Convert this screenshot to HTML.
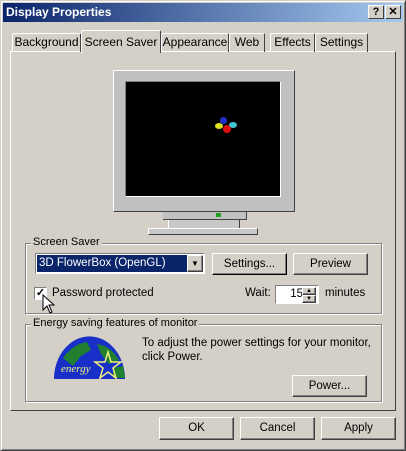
<!DOCTYPE html><html><head><style>
*{box-sizing:border-box;margin:0;padding:0}
body{width:406px;height:451px;background:#d4d0c8;font-family:"Liberation Sans",sans-serif;font-size:11px;color:#000;position:relative;overflow:hidden}
.a{position:absolute}
.win{left:0;top:0;width:406px;height:451px;border:1px solid;border-color:#d4d0c8 #404040 #404040 #d4d0c8;box-shadow:inset 1px 1px #fff,inset -1px -1px #808080}
.title{left:3px;top:3px;width:400px;height:19px;background:linear-gradient(90deg,#0a246a,#a6caf0);color:#fff;font-weight:bold;font-size:12px;line-height:19px;padding-left:3px}
.tb{top:5px;width:16px;height:14px;background:#d4d0c8;border:1px solid;border-color:#fff #404040 #404040 #fff;font-weight:bold;font-size:11px;text-align:center;line-height:12px;color:#000}
.tab{top:33px;height:19px;border:1px solid;border-color:#fff #404040 #d4d0c8 #fff;border-bottom:none;border-radius:2px 2px 0 0;text-align:center;line-height:16px;font-size:12px}
.panel{left:10px;top:51px;width:386px;height:360px;border:1px solid;border-color:#fff #404040 #404040 #fff}
.grp{border:1px solid #808080;box-shadow:1px 1px #fff,inset 1px 1px #fff}
.lbl{background:#d4d0c8;padding:0 2px;font-size:11px}
.btn{background:#d4d0c8;border:1px solid;border-color:#fff #404040 #404040 #fff;box-shadow:inset -1px -1px #808080;text-align:center;font-size:11px}
</style></head><body>
<div class="a win"></div>
<div class="a title">Display Properties</div>
<div class="a tb" style="left:368px">?</div>
<div class="a tb" style="left:385px">✕</div>
<div class="a panel"></div>
<div class="a tab" style="left:12px;width:69px">Background</div>
<div class="a tab" style="left:161px;width:68px">Appearance</div>
<div class="a tab" style="left:229px;width:36px">Web</div>
<div class="a tab" style="left:270px;width:45px">Effects</div>
<div class="a tab" style="left:315px;width:53px">Settings</div>
<div class="a tab" style="left:81px;top:30px;width:80px;height:23px;background:#d4d0c8;line-height:22px">Screen Saver</div>

<div class="a" style="left:113px;top:70px;width:182px;height:142px;background:#c0c0c0;border:1px solid;border-color:#fff #404040 #404040 #fff"></div>
<div class="a" style="left:125px;top:81px;width:156px;height:116px;background:#000;border:1px solid;border-color:#808080 #fff #fff #808080"></div>
<div class="a" style="left:220px;top:117px;width:7px;height:7px;border-radius:50%;background:#2030d0"></div>
<div class="a" style="left:215px;top:123px;width:8px;height:6px;border-radius:50%;background:#e0e020"></div>
<div class="a" style="left:229px;top:122px;width:8px;height:6px;border-radius:50%;background:#40c8d0"></div>
<div class="a" style="left:223px;top:125px;width:8px;height:8px;border-radius:50%;background:#e01010"></div>
<div class="a" style="left:163px;top:212px;width:84px;height:8px;background:#c0c0c0;border-bottom:1px solid #404040;border-right:1px solid #404040"></div>
<div class="a" style="left:216px;top:213px;width:5px;height:4px;background:#20a020"></div>
<div class="a" style="left:168px;top:220px;width:72px;height:8px;background:#c8c8c8;border-right:1px solid #404040;border-left:1px solid #fff"></div>
<div class="a" style="left:148px;top:228px;width:110px;height:7px;background:#c8c8c8;border:1px solid;border-color:#fff #404040 #404040 #fff"></div>

<div class="a grp" style="left:25px;top:243px;width:357px;height:71px"></div>
<div class="a lbl" style="left:31px;top:236px">Screen Saver</div>
<div class="a" style="left:35px;top:253px;width:170px;height:21px;background:#fff;border:1px solid;border-color:#808080 #fff #fff #808080"></div>
<div class="a" style="left:37px;top:255px;width:150px;height:17px;background:#0a246a;color:#fff;font-size:11.5px;line-height:17px;padding-left:2px">3D FlowerBox (OpenGL)</div>
<div class="a btn" style="left:187px;top:255px;width:16px;height:17px;font-size:8px;line-height:15px">▼</div>
<div class="a btn" style="left:212px;top:253px;width:75px;height:22px;line-height:20px;border-color:#fff #000 #000 #fff;font-size:11.5px">Settings...</div>
<div class="a btn" style="left:293px;top:253px;width:75px;height:22px;line-height:20px;font-size:11.5px">Preview</div>
<div class="a" style="left:34px;top:287px;width:13px;height:13px;background:#fff;border:1px solid;border-color:#808080 #fff #fff #808080;font-size:11px;line-height:11px;text-align:center;font-weight:bold">✓</div>
<div class="a" style="left:52px;top:287px;font-size:11.5px">Password protected</div>
<svg class="a" style="left:42px;top:294px" width="14" height="22"><path d="M1 1 L1 16 L5 12 L8 19 L10 18 L7 11 L12 11 Z" fill="#fff" stroke="#000"/></svg>
<div class="a" style="left:245px;top:287px;font-size:11.5px">Wait:</div>
<div class="a" style="left:275px;top:285px;width:44px;height:19px;background:#fff;border:1px solid;border-color:#808080 #fff #fff #808080;font-size:11.5px;line-height:17px;text-align:right;padding-right:15px">15</div>
<div class="a btn" style="left:302px;top:287px;width:14px;height:8px;font-size:6px;line-height:6px">▲</div>
<div class="a btn" style="left:302px;top:295px;width:14px;height:8px;font-size:6px;line-height:6px">▼</div>
<div class="a" style="left:325px;top:287px;font-size:11.5px">minutes</div>

<div class="a grp" style="left:25px;top:324px;width:357px;height:78px"></div>
<div class="a lbl" style="left:31px;top:317px">Energy saving features of monitor</div>
<svg class="a" style="left:53px;top:336px" width="73" height="44"><path d="M1 43 A35 42 0 0 1 72 43 Z" fill="#1830c8"/><path d="M10 22 Q20 8 34 6 L38 14 L28 20 L20 30 Z M44 8 Q58 10 66 24 L56 28 L48 18 Z M60 32 L70 30 L72 42 L60 42 Z" fill="#208030"/><text x="8" y="36" font-size="11" font-style="italic" fill="#f0f080" font-family="Liberation Serif,serif">energy</text><path d="M55 16 L58 26 L68 26 L60 32 L63 42 L55 36 L47 42 L50 32 L42 26 L52 26 Z" fill="none" stroke="#f0f080" stroke-width="1.5"/></svg>
<div class="a" style="left:142px;top:336px;font-size:11.5px;line-height:14px;width:236px">To adjust the power settings for your monitor, click Power.</div>
<div class="a btn" style="left:292px;top:375px;width:75px;height:22px;line-height:20px;font-size:11.5px">Power...</div>

<div class="a btn" style="left:159px;top:417px;width:75px;height:23px;line-height:21px;font-size:11.5px">OK</div>
<div class="a btn" style="left:240px;top:417px;width:75px;height:23px;line-height:21px;font-size:11.5px">Cancel</div>
<div class="a btn" style="left:321px;top:417px;width:75px;height:23px;line-height:21px;font-size:11.5px">Apply</div>
</body></html>
